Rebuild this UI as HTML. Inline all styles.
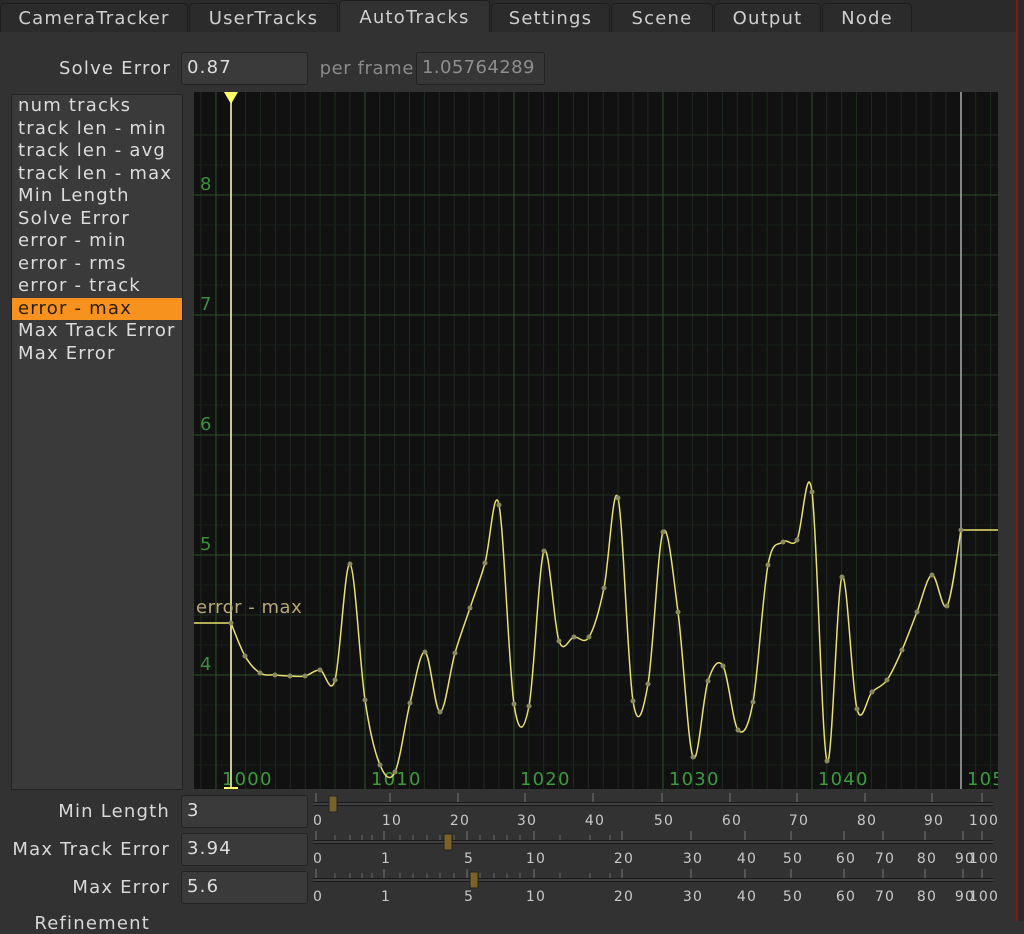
<!DOCTYPE html>
<html><head><style>
*{margin:0;padding:0;box-sizing:border-box}
body{width:1024px;height:921px;background:#323232;font-family:"DejaVu Sans","Liberation Sans",sans-serif;color:#d4d4d4;overflow:hidden;position:relative;font-size:18px;letter-spacing:1.2px}
.tabbar{position:absolute;left:0;top:0;width:1024px;height:32px;background:#2a2a2a}
.tab{position:absolute;top:3px;height:29px;background:#2b2b2b;border:1px solid #1e1e1e;border-bottom:none;border-radius:4px 4px 0 0;text-align:center;line-height:30px;font-size:18px;color:#cfcfcf}
.tab.act{background:#323232;top:0;height:33px;line-height:34px}
.panel{position:absolute;left:0;top:32px;width:1015px;height:889px;background:#323232}
.red{position:absolute;left:1016px;top:0;width:2px;height:921px;background:#8a1414}
.r{position:absolute;right:0;top:0;width:6px;height:921px;background:#2a2a2a}
.lbl{position:absolute;text-align:right;font-size:18px;color:#d8d8d8;white-space:nowrap}
.inp{position:absolute;background:#3a3a3a;border:1px solid #222;border-radius:3px;font-size:18px;padding-left:5px;color:#ddd;line-height:30px}
.list{position:absolute;left:11px;top:94px;width:172px;height:696px;background:#3a3a3a;border:1px solid #222}
.list div{height:22.5px;line-height:22px;padding-left:6px;font-size:18px;color:#dcdcdc;white-space:nowrap}
.list .sel{background:#f7921e;color:#2a1c08}
</style></head><body>
<div class="tabbar">
<div class="tab" style="left:0;width:188px">CameraTracker</div>
<div class="tab" style="left:189px;width:149px">UserTracks</div>
<div class="tab act" style="left:339px;width:151px">AutoTracks</div>
<div class="tab" style="left:491px;width:119px">Settings</div>
<div class="tab" style="left:611px;width:102px">Scene</div>
<div class="tab" style="left:714px;width:107px">Output</div>
<div class="tab" style="left:822px;width:90px">Node</div>
</div>
<div class="panel"></div>
<div class="red"></div><div class="r"></div>
<div class="lbl" style="left:0;width:171px;top:58px">Solve Error</div>
<div class="inp" style="left:181px;top:52px;width:127px;height:33px">0.87</div>
<div class="lbl" style="left:310px;width:104px;top:58px;color:#8a8a8a;letter-spacing:0.6px">per frame</div>
<div class="inp" style="left:416px;top:52px;width:129px;height:33px;color:#8e8e8e;background:#363636;letter-spacing:0.4px">1.05764289</div>
<div class="list">
<div>num tracks</div><div>track len - min</div><div>track len - avg</div><div>track len - max</div><div>Min Length</div><div>Solve Error</div><div>error - min</div><div>error - rms</div><div>error - track</div><div class="sel">error - max</div><div>Max Track Error</div><div>Max Error</div>
</div>
<svg id="g" style="position:absolute;left:194px;top:92px" width="804" height="697" viewBox="194 92 804 697"></svg>
<svg id="s" style="position:absolute;left:0;top:790px" width="1024" height="131" viewBox="0 790 1024 131"></svg>
<div class="lbl" style="left:0;width:170px;top:801px">Min Length</div>
<div class="inp" style="left:181px;top:795px;width:127px;height:33px">3</div>
<div class="lbl" style="left:0;width:170px;top:839px">Max Track Error</div>
<div class="inp" style="left:181px;top:833px;width:127px;height:33px">3.94</div>
<div class="lbl" style="left:0;width:170px;top:877px">Max Error</div>
<div class="inp" style="left:181px;top:871px;width:127px;height:33px">5.6</div>
<div class="lbl" style="left:0;width:150px;top:913px">Refinement</div>
<script>
var g=document.getElementById('g'),h='';
h+='<rect x="194" y="92" width="804" height="697" fill="#111111"/>';
for(var x=216-15*2;x<998;x+=14.9){h+='<line x1="'+x+'" y1="92" x2="'+x+'" y2="789" stroke="#1f2a1f" stroke-width="1"/>';}
for(var y=195-60;y<789;y+=60){h+='<line x1="194" y1="'+y+'" x2="998" y2="'+y+'" stroke="#1f2a1f"/>';}
for(var y=195-30;y<789;y+=60){h+='<line x1="194" y1="'+y+'" x2="998" y2="'+y+'" stroke="#181f18"/>';}
[216,365,514,663,812,961].forEach(function(x){h+='<line x1="'+x+'" y1="92" x2="'+x+'" y2="789" stroke="#2f4a2c"/>';});
[195,315,435,555,675].forEach(function(y){h+='<line x1="194" y1="'+y+'" x2="998" y2="'+y+'" stroke="#2f4a2c"/>';});
[[8,181],[7,301],[6,421],[5,541],[4,661]].forEach(function(a){h+='<text x="200" y="'+(a[1]+9)+'" fill="#3e8e3e" font-size="18" font-family="DejaVu Sans">'+a[0]+'</text>';});
[[1000,222],[1010,371],[1020,520],[1030,669],[1040,818],[1050,967]].forEach(function(a){h+='<text x="'+a[1]+'" y="785" fill="#3e9a3e" font-size="18" font-family="DejaVu Sans">'+a[0]+'</text>';});
h+='<line x1="961" y1="92" x2="961" y2="789" stroke="#aaa" stroke-width="1.5"/>';
h+='<line x1="231" y1="100" x2="231" y2="789" stroke="#c9c98a" stroke-width="2"/>';
h+='<polygon points="224,92 238,92 231,104" fill="#ffff66"/>';
h+='<rect x="224" y="787" width="14" height="3" fill="#ffff66"/>';
var P=[[231,623],[245,656],[260,673],[275,675],[290,676],[305,676],[320,670],[335,680],[350,564],[365,700],[380,765],[395,772],[410,703],[425,652],[440,712],[455,653],[470,608],[485,563],[499,505],[514,704],[529,706],[544,551],[559,641],[574,637],[589,637],[604,588],[618,498],[633,701],[648,684],[663,532],[678,612],[693,757],[708,681],[723,666],[738,730],[753,702],[768,565],[783,542],[797,540],[812,492],[827,761],[842,577],[857,709],[872,692],[887,680],[902,650],[917,612],[932,575],[947,606],[961,530]];
var d='M194,623 L231,623';
for(var i=0;i<P.length-1;i++){var p0=P[i-1]||P[i],p1=P[i],p2=P[i+1],p3=P[i+2]||P[i+1];
d+=' C'+(p1[0]+(p2[0]-p0[0])/6)+','+(p1[1]+(p2[1]-p0[1])/6)+' '+(p2[0]-(p3[0]-p1[0])/6)+','+(p2[1]-(p3[1]-p1[1])/6)+' '+p2[0]+','+p2[1];}
d+=' L998,530';
h+='<path d="'+d+'" fill="none" stroke="#e8e070" stroke-width="1.5"/>';
P.forEach(function(p){h+='<circle cx="'+p[0]+'" cy="'+p[1]+'" r="2.5" fill="#8a8a60"/>';});
h+='<text x="196" y="613" fill="#b8a878" font-size="18" letter-spacing="0.5" font-family="DejaVu Sans">error - max</text>';
g.innerHTML=h;
var s=document.getElementById('s'),t='';
function slider(y,ticks,minor,hx){
t+='<rect x="313" y="'+(y-2)+'" width="680" height="4" fill="#1a1a1a"/><line x1="313" y1="'+y+'" x2="993" y2="'+y+'" stroke="#666" stroke-width="1"/>';
minor.forEach(function(x){t+='<line x1="'+x+'" y1="'+(y-7)+'" x2="'+x+'" y2="'+(y-2)+'" stroke="#666"/>';});
ticks.forEach(function(a){t+='<line x1="'+a[1]+'" y1="'+(y-11)+'" x2="'+a[1]+'" y2="'+(y-2)+'" stroke="#777"/><text x="'+(a[1]+2)+'" y="'+(y+21)+'" fill="#c8c8c8" font-size="14" font-family="DejaVu Sans" text-anchor="middle">'+a[0]+'</text>';});
t+='<rect x="'+(hx-4)+'" y="'+(y-8)+'" width="8" height="16" fill="#7a6228" stroke="#222"/>';}
var lin=[[0,316],[10,390],[20,458],[30,525],[40,593],[50,662],[60,730],[70,797],[80,865],[90,932],[100,982]];
slider(804,lin,[],333);
var lg=[[0,316],[1,384],[5,467],[10,534],[20,622],[30,691],[40,745],[50,791],[60,844],[70,883],[80,925],[90,963],[100,982]];
var mn=[];[335,350,362,372,400,413,427,440,454,480,494,507,520,560,590,610].forEach(function(x){mn.push(x)});
slider(842,lg,mn,448);
slider(880,lg,mn,474);
s.innerHTML=t;
</script>
</body></html>
